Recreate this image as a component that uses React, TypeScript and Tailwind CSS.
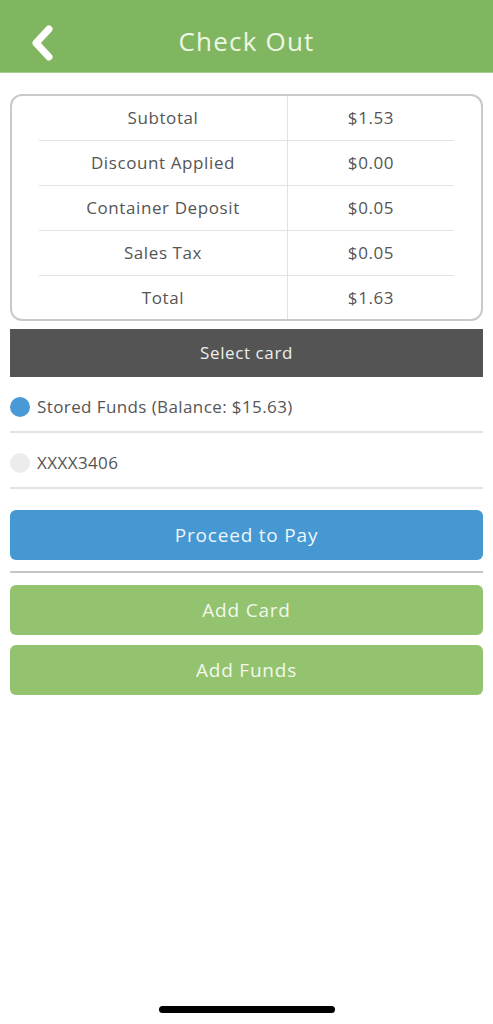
import React from 'react';

const rows = [
  { label: 'Subtotal', value: '$1.53' },
  { label: 'Discount Applied', value: '$0.00' },
  { label: 'Container Deposit', value: '$0.05' },
  { label: 'Sales Tax', value: '$0.05' },
  { label: 'Total', value: '$1.63' },
];

const font = { fontFamily: '"Open Sans", "DejaVu Sans", sans-serif' };

export default function App() {
  return (
    <div className="relative w-[493px] h-[1024px] bg-white text-[#555]" style={font}>
      {/* header */}
      <div className="relative h-[73px] bg-[#80b65f] border-b border-[#a9cf90] flex items-center justify-center">
        <button className="absolute left-[28px] top-[24px] w-[28px] h-[38px] flex items-center justify-center" aria-label="Back">
          <svg width="26" height="36" viewBox="0 0 26 36">
            <path d="M20 4 L7 18 L20 32" fill="none" stroke="#fff" strokeWidth="7" strokeLinecap="round" strokeLinejoin="round" />
          </svg>
        </button>
        <h1 className="text-[26px] text-[#eef6e6] tracking-[1.2px] pt-[10px]">Check Out</h1>
      </div>

      {/* totals */}
      <div className="mx-[10px] mt-[21px] border-2 border-[#c9c9c9] rounded-[12px] px-[27px]">
        {rows.map((r, i) => (
          <div
            key={r.label}
            className={`flex items-center text-[17px] tracking-[0.6px] ${i < rows.length - 1 ? 'h-[45px] border-b border-[#e2e2e2]' : 'h-[43px]'}`}
          >
            <div className="w-[249px] h-full flex items-center justify-center border-r border-[#e2e2e2]">{r.label}</div>
            <div className="flex-1 h-full flex items-center justify-center">{r.value}</div>
          </div>
        ))}
      </div>

      {/* select card */}
      <div className="mx-[10px] mt-[8px] h-[48px] bg-[#545454] flex items-center justify-center text-[17px] tracking-[0.6px] text-[#eeeeee]">
        Select card
      </div>

      <div className="mx-[10px]">
        <div className="h-[56px] flex items-center gap-[7px] border-b-2 border-[#e3e3e3] text-[17px] tracking-[0.4px] pt-[5px]">
          <span className="w-[20px] h-[20px] rounded-full bg-[#4899d5]" />
          <span>Stored Funds (Balance: $15.63)</span>
        </div>
        <div className="h-[56px] flex items-center gap-[7px] border-b-2 border-[#e3e3e3] text-[17px] tracking-[0.4px] pt-[5px]">
          <span className="w-[20px] h-[20px] rounded-full bg-[#ececec]" />
          <span>XXXX3406</span>
        </div>
      </div>

      <div className="mx-[10px] mt-[21px]">
        <button className="w-full h-[50px] rounded-[6px] bg-[#4598d1] text-[19px] text-[#eef5fb] tracking-[0.8px]">
          Proceed to Pay
        </button>
        <div className="mt-[11px] h-[2px] bg-[#c6c6c6]" />
        <button className="mt-[12px] w-full h-[50px] rounded-[6px] bg-[#93c36f] text-[19px] text-[#f2f8ec] tracking-[0.8px]">
          Add Card
        </button>
        <button className="mt-[10px] w-full h-[50px] rounded-[6px] bg-[#93c36f] text-[19px] text-[#f2f8ec] tracking-[0.8px]">
          Add Funds
        </button>
      </div>

      {/* home indicator */}
      <div className="absolute left-[159px] top-[1006px] w-[176px] h-[7px] rounded-full bg-black" />
    </div>
  );
}
